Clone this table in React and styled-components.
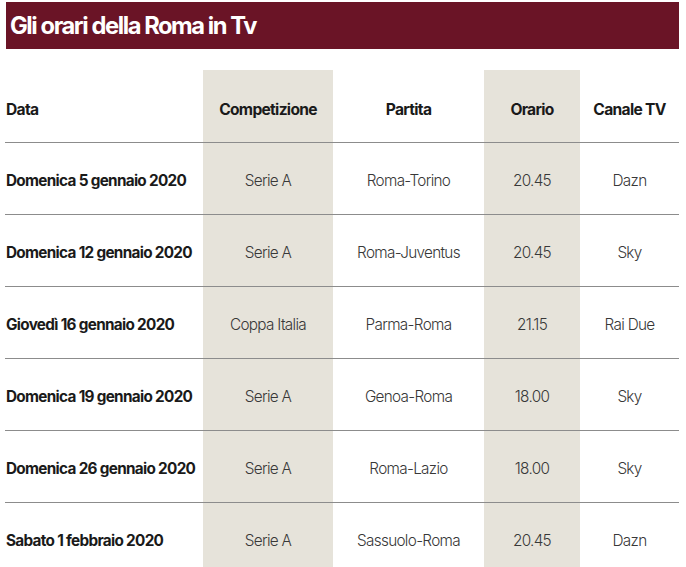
import React from 'react'
import styled, { createGlobalStyle } from 'styled-components'

const GlobalStyle = createGlobalStyle`
  html, body {
    margin: 0;
    padding: 0;
    background: #ffffff;
    overflow: hidden;
  }
  body {
    font-family: Inter, "Liberation Sans", Arial, sans-serif;
  }
`

const Page = styled.div`
  width: 686px;
  height: 567px;
  padding: 2px 7px 0 5px;
  box-sizing: border-box;
`

const TitleBar = styled.div`
  display: flex;
  align-items: center;
  height: 47px;
  margin-left: 1px;
  padding-left: 4px;
  padding-bottom: 1px;
  box-sizing: border-box;
  background: #6a1426;
  color: #ffffff;
  font-size: 23.7px;
  font-weight: 700;
  letter-spacing: -0.06em;
`

const Table = styled.div`
  display: grid;
  grid-template-columns: 198px 130px 151px 96px 99px;
  margin-top: 21px;
`

const Cell = styled.div`
  display: flex;
  align-items: center;
  justify-content: ${p => (p.$left ? 'flex-start' : 'center')};
  height: 72px;
  box-sizing: border-box;
  padding-left: ${p => (p.$left ? '1px' : '0')};
  padding-top: ${p => (p.$head ? '6px' : '3px')};
  background: ${p => (p.$shade ? '#e6e3da' : 'transparent')};
  border-top: ${p => (p.$head ? 'none' : '1.5px solid #8c8c8c')};
  color: ${p => (p.$bold ? '#1a1a1a' : '#383838')};
  font-size: ${p => (p.$head ? '15.6px' : '15.3px')};
  font-weight: ${p => (p.$bold ? 700 : 300)};
  letter-spacing: -0.045em;
  white-space: nowrap;
`

const shaded = [false, true, false, true, false]

const headers = ['Data', 'Competizione', 'Partita', 'Orario', 'Canale TV']

const rows = [
  ['Domenica 5 gennaio 2020', 'Serie A', 'Roma-Torino', '20.45', 'Dazn'],
  ['Domenica 12 gennaio 2020', 'Serie A', 'Roma-Juventus', '20.45', 'Sky'],
  ['Giovedì 16 gennaio 2020', 'Coppa Italia', 'Parma-Roma', '21.15', 'Rai Due'],
  ['Domenica 19 gennaio 2020', 'Serie A', 'Genoa-Roma', '18.00', 'Sky'],
  ['Domenica 26 gennaio 2020', 'Serie A', 'Roma-Lazio', '18.00', 'Sky'],
  ['Sabato 1 febbraio 2020', 'Serie A', 'Sassuolo-Roma', '20.45', 'Dazn'],
]

export default function App() {
  return (
    <Page>
      <GlobalStyle />
      <TitleBar>Gli orari della Roma in Tv</TitleBar>
      <Table>
        {headers.map((h, i) => (
          <Cell key={h} $head $bold $left={i === 0} $shade={shaded[i]}>
            {h}
          </Cell>
        ))}
        {rows.map((row, r) =>
          row.map((v, i) => (
            <Cell key={r + '-' + i} $bold={i === 0} $left={i === 0} $shade={shaded[i]}>
              {v}
            </Cell>
          ))
        )}
      </Table>
    </Page>
  )
}
